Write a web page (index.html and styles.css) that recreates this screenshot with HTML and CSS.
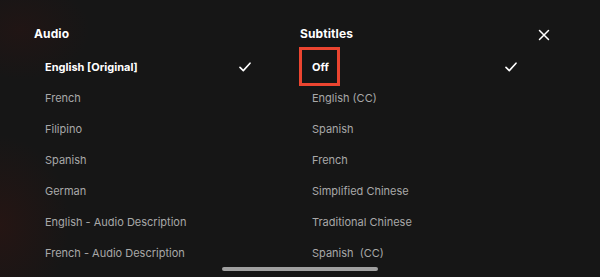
FILE: index.html
```html
<!DOCTYPE html>
<html lang="en">
<head>
<meta charset="utf-8">
<title>Audio &amp; Subtitles</title>
<link rel="stylesheet" href="styles.css">
</head>
<body>
<div class="screen">
  <div class="panel">
    <section class="col col-audio">
      <h2 class="col-title">Audio</h2>
      <ul class="list">
        <li class="item selected"><span class="label">English [Original]</span><svg class="check" viewBox="0 0 12 10"><path d="M1 5.4 L4.3 8.6 L11 1.2" fill="none" stroke="#fff" stroke-width="1.6" stroke-linecap="round" stroke-linejoin="round"/></svg></li>
        <li class="item"><span class="label">French</span></li>
        <li class="item"><span class="label">Filipino</span></li>
        <li class="item"><span class="label">Spanish</span></li>
        <li class="item"><span class="label">German</span></li>
        <li class="item"><span class="label">English - Audio Description</span></li>
        <li class="item"><span class="label">French - Audio Description</span></li>
      </ul>
    </section>
    <section class="col col-subs">
      <h2 class="col-title">Subtitles</h2>
      <ul class="list">
        <li class="item selected"><span class="label highlight">Off</span><svg class="check" viewBox="0 0 12 10"><path d="M1 5.4 L4.3 8.6 L11 1.2" fill="none" stroke="#fff" stroke-width="1.6" stroke-linecap="round" stroke-linejoin="round"/></svg></li>
        <li class="item"><span class="label">English (CC)</span></li>
        <li class="item"><span class="label">Spanish</span></li>
        <li class="item"><span class="label">French</span></li>
        <li class="item"><span class="label">Simplified Chinese</span></li>
        <li class="item"><span class="label">Traditional Chinese</span></li>
        <li class="item"><span class="label">Spanish&nbsp; (CC)</span></li>
      </ul>
    </section>
    <button class="close" aria-label="Close"><svg viewBox="0 0 12 12"><path d="M1.5 1.5 L10.5 10.5 M10.5 1.5 L1.5 10.5" stroke="#fff" stroke-width="1.5" stroke-linecap="round"/></svg></button>
  </div>
  <div class="home-bar"></div>
</div>
</body>
</html>
```

FILE: styles.css
```css
*, *::before, *::after { box-sizing: border-box; }
html, body {
  margin: 0;
  padding: 0;
  width: 600px;
  height: 277px;
  overflow: hidden;
}
body {
  background: #151515;
  font-family: "Inter", "Liberation Sans", sans-serif;
  color: #fff;
}
.screen {
  position: relative;
  width: 600px;
  height: 277px;
  background:
    radial-gradient(ellipse 70px 90px at 0px 225px, rgba(55, 20, 16, 0.45), rgba(55, 20, 16, 0) 100%),
    radial-gradient(ellipse 70px 50px at 20px 30px, rgba(45, 20, 18, 0.45), rgba(45, 20, 18, 0) 100%),
    #161616;
  display: flex;
  flex-direction: column;
}
.panel {
  display: grid;
  grid-template-columns: 266px 217px 1fr;
  padding: 26px 0 0 34px;
}
.col-title {
  margin: 0;
  font-size: 12px;
  font-weight: 700;
  line-height: 16px;
  color: #fff;
  letter-spacing: 0.1px;
}
.list {
  list-style: none;
  margin: 9px 0 0 0;
  padding: 0;
  width: 217px;
}
.item {
  display: flex;
  align-items: center;
  justify-content: space-between;
  height: 31px;
  padding-left: 11px;
  font-size: 11px;
  color: #a8a8a8;
}
.col-subs .item { padding-left: 12px; }
.item.selected {
  color: #fff;
  font-weight: 700;
}
.label { position: relative; }
.highlight::after {
  content: "";
  position: absolute;
  left: -13px;
  top: -13px;
  width: 41px;
  height: 39px;
  border: 3px solid #ec4530;
}
.check {
  width: 12px;
  height: 10px;
}
.close {
  justify-self: start;
  align-self: start;
  margin: 3px 0 0 21px;
  padding: 0;
  border: 0;
  background: none;
  width: 12px;
  height: 12px;
  display: block;
}
.close svg { width: 12px; height: 12px; display: block; }
.home-bar {
  position: absolute;
  left: 222px;
  top: 267px;
  width: 156px;
  height: 4px;
  border-radius: 2px;
  background: #a0a0a0;
}
```
